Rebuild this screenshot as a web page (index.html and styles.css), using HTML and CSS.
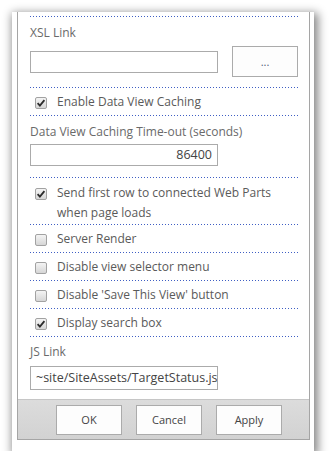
FILE: index.html
```html
<!DOCTYPE html>
<html>
<head>
<meta charset="utf-8">
<link rel="stylesheet" href="styles.css">
</head>
<body>
<div class="frame">
  <div class="panel">
    <div class="scroll">
      <div class="sep"></div>
      <div class="section xsl">
        <div class="label">XSL Link</div>
        <div class="xsl-row">
          <div class="textbox"></div>
          <div class="browse">...</div>
        </div>
      </div>
      <div class="sep"></div>
      <div class="check-row">
        <span class="cb on"><svg viewBox="0 0 12 12" width="12" height="12"><path d="M2.6 6.2 L4.9 8.6 L9.4 3.2" fill="none" stroke="#2b2b2b" stroke-width="1.8"/></svg></span>
        <span class="text">Enable Data View Caching</span>
      </div>
      <div class="sep"></div>
      <div class="section timeout">
        <div class="label">Data View Caching Time-out (seconds)</div>
        <div class="textbox num">86400</div>
      </div>
      <div class="sep"></div>
      <div class="check-row two">
        <span class="cb on"><svg viewBox="0 0 12 12" width="12" height="12"><path d="M2.6 6.2 L4.9 8.6 L9.4 3.2" fill="none" stroke="#2b2b2b" stroke-width="1.8"/></svg></span>
        <span class="text">Send first row to connected Web Parts when page loads</span>
      </div>
      <div class="sep"></div>
      <div class="check-row">
        <span class="cb"></span>
        <span class="text">Server Render</span>
      </div>
      <div class="sep"></div>
      <div class="check-row">
        <span class="cb"></span>
        <span class="text">Disable view selector menu</span>
      </div>
      <div class="sep"></div>
      <div class="check-row">
        <span class="cb"></span>
        <span class="text">Disable 'Save This View' button</span>
      </div>
      <div class="sep"></div>
      <div class="check-row">
        <span class="cb on"><svg viewBox="0 0 12 12" width="12" height="12"><path d="M2.6 6.2 L4.9 8.6 L9.4 3.2" fill="none" stroke="#2b2b2b" stroke-width="1.8"/></svg></span>
        <span class="text">Display search box</span>
      </div>
      <div class="sep"></div>
      <div class="section jslink">
        <div class="label">JS Link</div>
        <div class="textbox js">~site/SiteAssets/TargetStatus.js</div>
      </div>
    </div>
    <div class="footer">
      <div class="btn">OK</div>
      <div class="btn">Cancel</div>
      <div class="btn">Apply</div>
    </div>
  </div>
</div>
</body>
</html>
```

FILE: styles.css
```css
html, body {
  margin: 0;
  padding: 0;
  background: #ffffff;
}
body {
  font-family: "Open Sans", "Noto Sans", sans-serif;
  font-size: 12px;
  color: #5a5a5a;
}
.frame {
  margin: 12px 0 0 12px;
  width: 302px;
  height: 439px;
  box-sizing: border-box;
  background: #fff;
  padding: 0 4px 11px 5px;
  box-shadow: 2px 3px 9px 2px rgba(0,0,0,0.48);
}
.panel {
  height: 100%;
  box-sizing: border-box;
  border: 1px solid #a5a5a5;
  border-top: none;
  display: flex;
  flex-direction: column;
}
.scroll {
  flex: 1;
  overflow: hidden;
  padding: 4px 11px 0 12px;
}
.sep {
  height: 1px;
  background-image: linear-gradient(to right, #3f5fc4 1px, transparent 1px);
  background-size: 3px 1px;
}
.label {
  color: #6a6a6a;
  line-height: 18px;
}
.section {
  box-sizing: border-box;
}
.section.xsl {
  padding-top: 7px;
  height: 70px;
}
.xsl-row {
  display: flex;
  align-items: center;
  margin-top: 4px;
}
.textbox {
  width: 188px;
  height: 22px;
  box-sizing: border-box;
  border: 1px solid #ababab;
  background: #fff;
}
.browse {
  margin-left: 14px;
  width: 66px;
  height: 31px;
  box-sizing: border-box;
  border: 1px solid #ababab;
  background: #fdfdfd;
  display: flex;
  align-items: center;
  justify-content: center;
  color: #55607a;
  font-size: 11px;
}
.check-row {
  display: flex;
  align-items: flex-start;
  height: 27px;
  padding-top: 4px;
  box-sizing: border-box;
}
.check-row.two {
  height: 46px;
  padding-top: 5px;
}
.check-row .text {
  line-height: 20px;
  color: #5a5a5a;
}
.cb {
  flex: none;
  width: 12px;
  height: 12px;
  box-sizing: border-box;
  margin: 5px 10px 0 5px;
  border: 1px solid #a2a2a2;
  border-radius: 2px;
  background: linear-gradient(#f4f4f4, #d6d6d6);
  position: relative;
}
.cb svg {
  position: absolute;
  left: -1px;
  top: -1px;
}
.section.timeout {
  padding-top: 7px;
  height: 61px;
}
.textbox.num {
  margin-top: 3px;
  text-align: right;
  padding-right: 5px;
  line-height: 20px;
  font-size: 12.5px;
  color: #444;
}
.section.jslink {
  padding-top: 6px;
}
.textbox.js {
  margin-top: 5px;
  height: 24px;
  line-height: 22px;
  padding-left: 5px;
  white-space: nowrap;
  overflow: hidden;
  font-size: 12.5px;
  color: #444;
}
.footer {
  height: 40px;
  flex: none;
  box-sizing: border-box;
  border-top: 1px solid #c6c6c6;
  background: linear-gradient(#dcdcdc, #d2d2d2);
  display: flex;
  align-items: center;
  padding-left: 38px;
  gap: 14px;
}
.btn {
  width: 66px;
  height: 30px;
  box-sizing: border-box;
  border: 1px solid #ababab;
  background: #fdfdfd;
  display: flex;
  align-items: center;
  justify-content: center;
  color: #444;
  font-size: 11px;
}
```
